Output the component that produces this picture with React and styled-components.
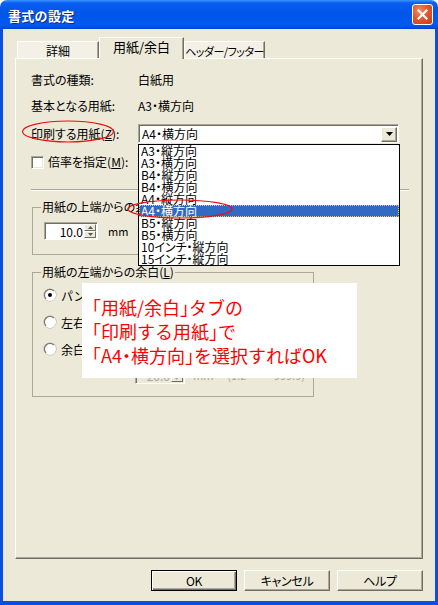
import React from 'react';
import styled, { createGlobalStyle, css } from 'styled-components';

const FONT = `"Noto Sans CJK JP", "Noto Sans", sans-serif`;

const Global = createGlobalStyle`
  html, body { margin: 0; padding: 0; background: #ffffff; }
  body { font-family: ${FONT}; font-size: 12px; color: #000; }
  * { box-sizing: border-box; }
`;

const Window = styled.div`
  position: relative;
  width: 438px;
  height: 605px;
  display: flex;
  flex-direction: column;
  overflow: hidden;
  border-radius: 7px 7px 0 0;
`;

const TitleBar = styled.div`
  flex: none;
  height: 29px;
  display: flex;
  align-items: center;
  justify-content: space-between;
  padding: 2px 5px 0 8px;
  background: linear-gradient(to bottom, #3d95ff 0%, #0a5ef0 10%, #0055ea 45%, #005af0 85%, #0051e0 93%, #003fd2 100%);
`;

const TitleText = styled.span`
  color: #fff;
  font-weight: bold;
  font-size: 13px;
  line-height: 16px;
  letter-spacing: 0.3px;
  text-shadow: 1px 1px 0 #0f2a8a;
`;

const CloseButton = styled.div`
  width: 21px;
  height: 21px;
  margin-top: -2px;
  border: 1px solid #fff;
  border-radius: 3px;
  background: radial-gradient(circle at 35% 30%, #f08a62 0%, #e2582e 45%, #c8391a 100%);
  display: flex;
  align-items: center;
  justify-content: center;
`;

const Client = styled.div`
  flex: 1;
  display: flex;
  flex-direction: column;
  background: #ece9d8;
  border: solid #0b4ee4;
  border-width: 0 3px 4px 3px;
  padding: 8px 12px 10px 12px;
`;

const TabStrip = styled.div`
  flex: none;
  height: 21px;
  display: flex;
  align-items: flex-end;
  padding-left: 2px;
  position: relative;
  z-index: 1;
`;

const Tab = styled.div`
  width: ${p => p.$w}px;
  height: 17px;
  display: flex;
  align-items: center;
  justify-content: center;
  background: #f3f1e6;
  border-top: 1px solid #fff;
  border-left: 1px solid #fff;
  border-right: 1px solid #716f64;
  box-shadow: inset -1px 0 0 #aca899;
  font-size: ${p => p.$fs || 12}px;
  line-height: 14px;
  white-space: nowrap;
  overflow: hidden;
  font-feature-settings: "palt";
  letter-spacing: ${p => p.$ls || 0}px;
  padding-top: 1px;
  ${p => p.$active && css`
    height: 22px;
    margin-bottom: -1px;
    background: #ece9d8;
    font-size: 13px;
    align-items: flex-start;
    padding-top: 2px;
  `}
`;

const Panel = styled.div`
  flex: 1;
  display: flex;
  flex-direction: column;
  align-items: flex-start;
  border-top: 1px solid #fff;
  border-left: 1px solid #fff;
  border-right: 1px solid #716f64;
  border-bottom: 1px solid #716f64;
  box-shadow: inset -1px -1px 0 #aca899;
  padding: 12px 12px 0 15px;
`;

const InfoRow = styled.div`
  display: flex;
  align-items: center;
  height: ${p => p.$h || 18}px;
  margin-top: ${p => p.$mt || 0}px;
  line-height: 14px;
  white-space: nowrap;
  font-feature-settings: "palt";
`;

const Label = styled.span`
  width: 107px;
  flex: none;
`;

const Combo = styled.div`
  width: 261px;
  height: 19px;
  display: flex;
  align-items: center;
  justify-content: space-between;
  background: #fff;
  border: 1px solid;
  border-color: #aca899 #fff #fff #aca899;
  box-shadow: inset 1px 1px 0 #716f64;
  padding: 0 1px 0 3px;
  font-feature-settings: "palt";
`;

const ComboArrow = styled.div`
  width: 16px;
  height: 15px;
  margin-top: 1px;
  display: flex;
  align-items: center;
  justify-content: center;
  background: #ece9d8;
  border: 1px solid;
  border-color: #fff #716f64 #716f64 #fff;
  box-shadow: inset -1px -1px 0 #aca899;
`;

const CheckBox = styled.span`
  width: 13px;
  height: 13px;
  flex: none;
  background: #fff;
  border: 1px solid;
  border-color: #aca899 #fff #fff #aca899;
  box-shadow: inset 1px 1px 0 #716f64, inset -1px -1px 0 #ece9d8;
  margin-right: 4px;
`;

const Separator = styled.div`
  align-self: stretch;
  height: 0;
  margin: 18px 1px 0 0;
  border-top: 1px solid #aca899;
  border-bottom: 1px solid #fff;
`;

const Group = styled.fieldset`
  width: 282px;
  margin: ${p => p.$mt}px 0 0 1px;
  padding: ${p => p.$pt}px 8px ${p => p.$pb}px 8px;
  border: 1px solid #aca899;
  min-width: 0;
`;

const Legend = styled.legend`
  padding: 0 1px;
  font-size: 12px;
  line-height: 14px;
  white-space: nowrap;
  font-feature-settings: "palt";
`;

const SpinRow = styled.div`
  display: flex;
  align-items: center;
  height: 18px;
  margin: ${p => p.$mt || 0}px 0 0 ${p => p.$ml}px;
  white-space: nowrap;
  color: ${p => (p.$disabled ? '#aca899' : '#000')};
`;

const SpinBox = styled.div`
  width: ${p => p.$w}px;
  height: 18px;
  display: flex;
  background: ${p => (p.$disabled ? '#ece9d8' : '#fff')};
  border: 1px solid;
  border-color: #aca899 #fff #fff #aca899;
  box-shadow: inset 1px 1px 0 #716f64;
  padding: 1px 1px 1px 2px;
`;

const SpinValue = styled.span`
  flex: 1;
  text-align: right;
  line-height: 15px;
  padding-right: 1px;
  font-size: 12px;
`;

const SpinButtons = styled.div`
  width: 12px;
  display: flex;
  flex-direction: column;
`;

const SpinBtn = styled.div`
  flex: 1;
  display: flex;
  align-items: center;
  justify-content: center;
  background: #ece9d8;
  border: 1px solid;
  border-color: #fff #716f64 #716f64 #fff;
`;

const Unit = styled.span`
  margin-left: ${p => p.$ml}px;
  font-size: 11px;
`;

const RadioRow = styled.div`
  display: flex;
  align-items: center;
  height: 16px;
  margin: ${p => p.$mt}px 0 0 3px;
  white-space: nowrap;
`;

const Radio = styled.span`
  width: 12px;
  height: 12px;
  flex: none;
  border-radius: 50%;
  background: #fff;
  border: 1px solid;
  border-color: #716f64 #fff #fff #716f64;
  box-shadow: 0 0 0 0.5px #aca899;
  margin-right: 5px;
  display: flex;
  align-items: center;
  justify-content: center;
  &::after {
    content: '';
    width: 4px;
    height: 4px;
    border-radius: 50%;
    background: ${p => (p.$checked ? '#000' : 'transparent')};
  }
`;

const ButtonRow = styled.div`
  flex: none;
  display: flex;
  justify-content: flex-end;
  gap: 7px;
  margin-top: 11px;
`;

const DialogButton = styled.div`
  width: 86px;
  height: 21px;
  display: flex;
  align-items: center;
  justify-content: center;
  background: #ece9d8;
  border: 1px solid;
  border-color: #fff #716f64 #716f64 #fff;
  box-shadow: inset -1px -1px 0 #aca899;
  font-size: 12px;
  line-height: 14px;
  font-feature-settings: "palt";
  letter-spacing: -0.3px;
  ${p => p.$default && css`
    border-color: #000;
    box-shadow: inset 1px 1px 0 #fff, inset -1px -1px 0 #716f64, inset -2px -2px 0 #aca899;
  `}
`;

const DropList = styled.div`
  position: absolute;
  left: 138px;
  top: 144px;
  width: 262px;
  height: 122px;
  background: #fff;
  border: 1px solid #000;
  z-index: 5;
`;

const DropItem = styled.div`
  height: 12px;
  line-height: 12px;
  padding-left: 2px;
  font-size: 12px;
  white-space: nowrap;
  font-feature-settings: "palt";
  ${p => p.$selected && css`
    background: #316ac5;
    color: #fff;
    outline: 1px dotted #e6c96a;
    outline-offset: -1px;
  `}
`;

const Annotation = styled.div`
  position: absolute;
  left: 82px;
  top: 283px;
  width: 275px;
  height: 95px;
  background: #fff;
  padding: 12px 0 0 10px;
  color: #ff0000;
  font-size: 18px;
  line-height: 24px;
  white-space: nowrap;
  font-feature-settings: "halt";
  z-index: 6;
`;

const Marks = styled.svg`
  position: absolute;
  left: 0;
  top: 0;
  width: 438px;
  height: 605px;
  pointer-events: none;
  z-index: 7;
`;

const paperSizes = [
  'A3・縦方向', 'A3・横方向', 'B4・縦方向', 'B4・横方向', 'A4・縦方向',
  'A4・横方向', 'B5・縦方向', 'B5・横方向', '10インチ・縦方向', '15インチ・縦方向',
];

const Tri = ({ up, color = '#000' }) => (
  <svg width="5" height="3" viewBox="0 0 5 3">
    <path d={up ? 'M0 3 L2.5 0 L5 3 Z' : 'M0 0 L5 0 L2.5 3 Z'} fill={color} />
  </svg>
);

const Spin = ({ value, w, disabled }) => (
  <SpinBox $w={w} $disabled={disabled}>
    <SpinValue>{value}</SpinValue>
    <SpinButtons>
      <SpinBtn><Tri up color={disabled ? '#aca899' : '#555'} /></SpinBtn>
      <SpinBtn><Tri color={disabled ? '#aca899' : '#555'} /></SpinBtn>
    </SpinButtons>
  </SpinBox>
);

export default function App() {
  return (
    <>
      <Global />
      <Window>
        <TitleBar>
          <TitleText>書式の設定</TitleText>
          <CloseButton>
            <svg width="11" height="11" viewBox="0 0 11 11">
              <path d="M1.5 1.5 L9.5 9.5 M9.5 1.5 L1.5 9.5" stroke="#fff" strokeWidth="2.2" strokeLinecap="square" />
            </svg>
          </CloseButton>
        </TitleBar>
        <Client>
          <TabStrip>
            <Tab $w={82}>詳細</Tab>
            <Tab $w={85} $active>用紙/余白</Tab>
            <Tab $w={81} $fs={11} $ls={-0.5}>ヘッダー/フッター</Tab>
          </TabStrip>
          <Panel>
            <InfoRow>
              <Label>書式の種類:</Label>
              <span>白紙用</span>
            </InfoRow>
            <InfoRow $mt={8}>
              <Label>基本となる用紙:</Label>
              <span>A3・横方向</span>
            </InfoRow>
            <InfoRow $mt={9} $h={19}>
              <Label>印刷する用紙(<u>Z</u>):</Label>
              <Combo>
                <span>A4・横方向</span>
                <ComboArrow>
                  <svg width="7" height="4" viewBox="0 0 7 4"><path d="M0 0 H7 L3.5 4 Z" fill="#000" /></svg>
                </ComboArrow>
              </Combo>
            </InfoRow>
            <InfoRow $mt={10}>
              <CheckBox />
              <span>倍率を指定(<u>M</u>):</span>
            </InfoRow>
            <Separator />
            <Group $mt={9} $pt={8} $pb={14}>
              <Legend>用紙の上端からの余白(<u>T</u>)</Legend>
              <SpinRow $ml={3}>
                <Spin value="10.0" w={54} />
                <Unit $ml={10}>mm</Unit>
                <Unit $ml={10}>(4.2 ～ 999.9)</Unit>
              </SpinRow>
            </Group>
            <Group $mt={10} $pt={8} $pb={12}>
              <Legend>用紙の左端からの余白(<u>L</u>)</Legend>
              <RadioRow $mt={0}><Radio $checked /><span>パンチ穴の余白</span></RadioRow>
              <RadioRow $mt={11}><Radio /><span>左右同じ余白</span></RadioRow>
              <RadioRow $mt={11}><Radio /><span>余白を指定</span></RadioRow>
              <SpinRow $ml={94} $mt={9} $disabled>
                <Spin value="20.0" w={55} disabled />
                <Unit $ml={8}>mm</Unit>
                <Unit $ml={14}>(1.2</Unit>
                <Unit $ml={14}>～ 999.9)</Unit>
              </SpinRow>
            </Group>
          </Panel>
          <ButtonRow>
            <DialogButton $default>OK</DialogButton>
            <DialogButton>キャンセル</DialogButton>
            <DialogButton>ヘルプ</DialogButton>
          </ButtonRow>
        </Client>

        <DropList>
          {paperSizes.map((s, i) => (
            <DropItem key={s} $selected={i === 5}>{s}</DropItem>
          ))}
        </DropList>

        <Annotation>
          <div>「用紙/余白」タブの</div>
          <div>「印刷する用紙」で</div>
          <div>「A4・横方向」を選択すればOK</div>
        </Annotation>

        <Marks viewBox="0 0 438 605">
          <ellipse cx="68" cy="131.5" rx="45.5" ry="10.5" fill="none" stroke="#e81010" strokeWidth="1.2" />
          <ellipse cx="180" cy="209" rx="52" ry="9" fill="none" stroke="#e81010" strokeWidth="1.2" />
        </Marks>
      </Window>
    </>
  );
}
